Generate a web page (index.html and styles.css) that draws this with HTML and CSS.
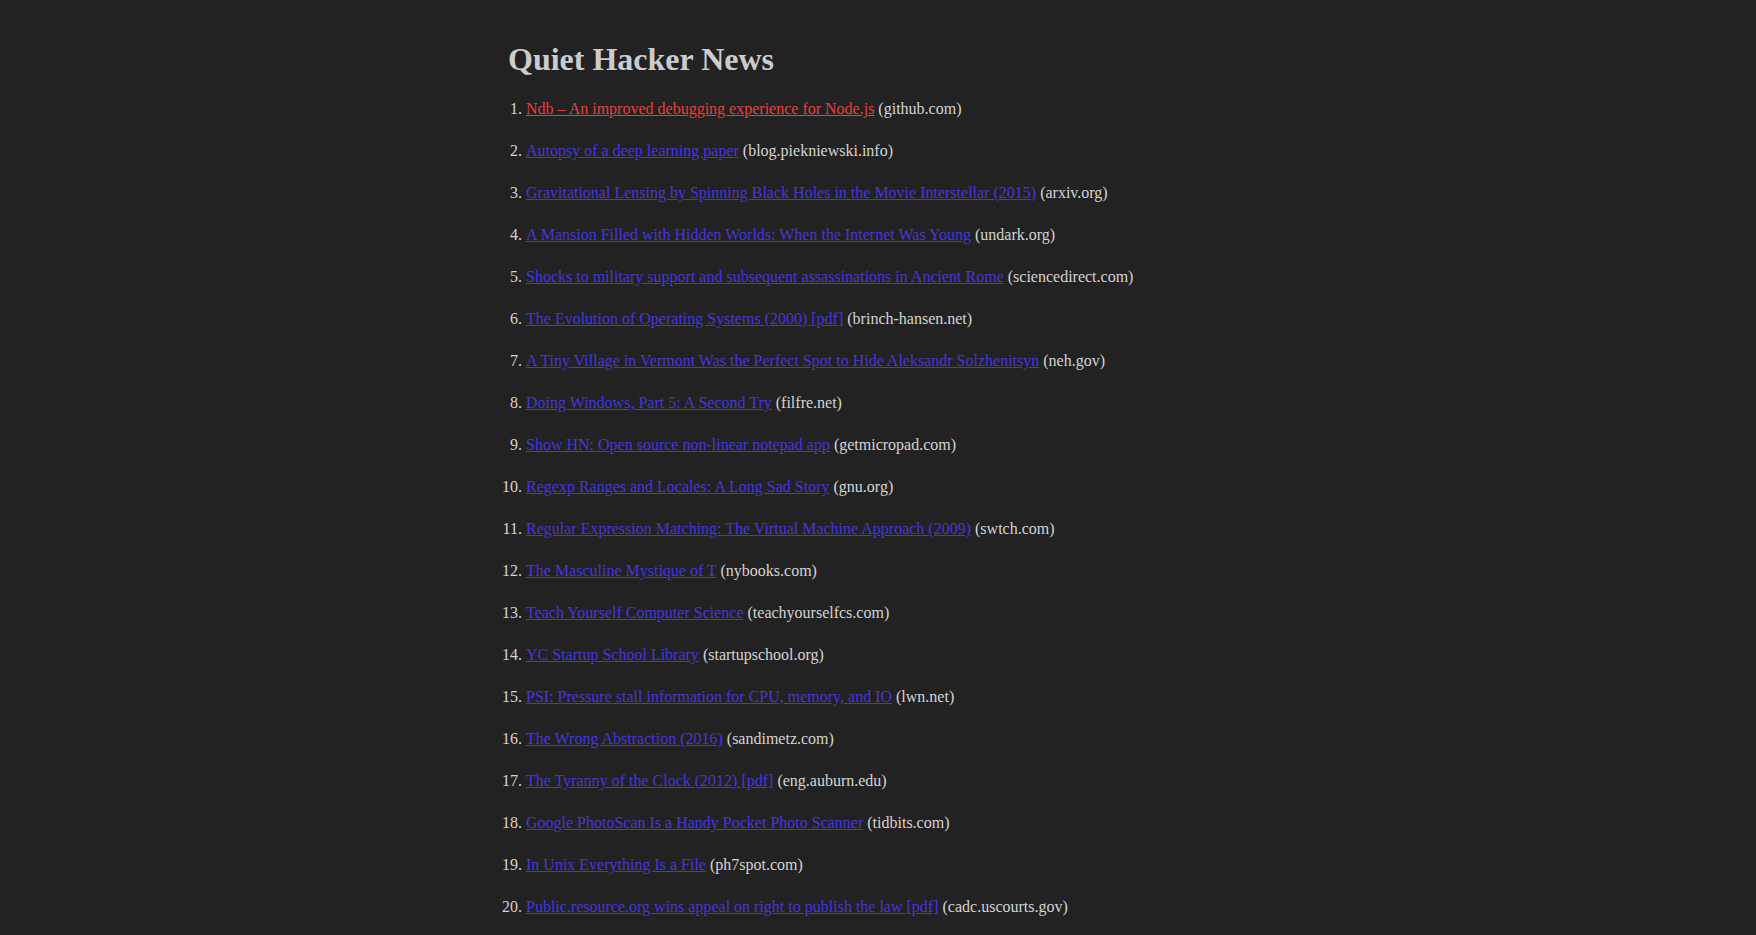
FILE: index.html
```html
<!DOCTYPE html>
<html>
<head>
<meta charset="utf-8">
<title>Quiet Hacker News</title>
<link rel="stylesheet" href="styles.css">
</head>
<body>
<main class="page">
  <h1 class="title">Quiet Hacker News</h1>
  <ol class="stories">
    <li><a class="visited" href="#">Ndb – An improved debugging experience for Node.js</a> (github.com)</li>
    <li><a href="#">Autopsy of a deep learning paper</a> (blog.piekniewski.info)</li>
    <li><a href="#">Gravitational Lensing by Spinning Black Holes in the Movie Interstellar (2015)</a> (arxiv.org)</li>
    <li><a href="#">A Mansion Filled with Hidden Worlds: When the Internet Was Young</a> (undark.org)</li>
    <li><a href="#">Shocks to military support and subsequent assassinations in Ancient Rome</a> (sciencedirect.com)</li>
    <li><a href="#">The Evolution of Operating Systems (2000) [pdf]</a> (brinch-hansen.net)</li>
    <li><a href="#">A Tiny Village in Vermont Was the Perfect Spot to Hide Aleksandr Solzhenitsyn</a> (neh.gov)</li>
    <li><a href="#">Doing Windows, Part 5: A Second Try</a> (filfre.net)</li>
    <li><a href="#">Show HN: Open source non-linear notepad app</a> (getmicropad.com)</li>
    <li><a href="#">Regexp Ranges and Locales: A Long Sad Story</a> (gnu.org)</li>
    <li><a href="#">Regular Expression Matching: The Virtual Machine Approach (2009)</a> (swtch.com)</li>
    <li><a href="#">The Masculine Mystique of T</a> (nybooks.com)</li>
    <li><a href="#">Teach Yourself Computer Science</a> (teachyourselfcs.com)</li>
    <li><a href="#">YC Startup School Library</a> (startupschool.org)</li>
    <li><a href="#">PSI: Pressure stall information for CPU, memory, and IO</a> (lwn.net)</li>
    <li><a href="#">The Wrong Abstraction (2016)</a> (sandimetz.com)</li>
    <li><a href="#">The Tyranny of the Clock (2012) [pdf]</a> (eng.auburn.edu)</li>
    <li><a href="#">Google PhotoScan Is a Handy Pocket Photo Scanner</a> (tidbits.com)</li>
    <li><a href="#">In Unix Everything Is a File</a> (ph7spot.com)</li>
    <li><a href="#">Public.resource.org wins appeal on right to publish the law [pdf]</a> (cadc.uscourts.gov)</li>
  </ol>
</main>
</body>
</html>
```

FILE: styles.css
```css
html, body {
  margin: 0;
  padding: 0;
  background: #222222;
}

body {
  font-family: "Liberation Serif", "Times New Roman", serif;
  font-size: 16px;
  color: #d4d4d4;
}

.page {
  width: 740px;
  margin: 0 auto;
  padding-top: 41px;
}

.title {
  margin: 0 0 23px 0;
  font-size: 32px;
  font-weight: bold;
  line-height: 36px;
  color: #cccccc;
}

.stories {
  margin: 0;
  padding: 0 0 0 18px;
}

.stories li {
  line-height: 18px;
  margin-bottom: 24px;
}

.stories a {
  color: #4636de;
  text-decoration: underline;
}

.stories a.visited {
  color: #e6403c;
}
```
